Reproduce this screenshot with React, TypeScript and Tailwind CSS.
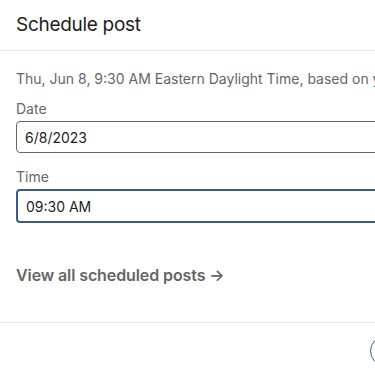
import React from "react";

export default function App() {
  return (
    <div
      className="w-[375px] h-[375px] overflow-hidden bg-white text-[#191919]"
      style={{ fontFamily: "Inter, 'Noto Sans', sans-serif" }}
    >
      <div className="w-[552px]">
        {/* Header */}
        <div className="h-[51px] px-4 flex items-center border-b border-[#e8e8e8]">
          <h2 className="text-[19px] leading-[26px] font-normal tracking-[-0.3px] text-[#1d1d1d]">Schedule post</h2>
        </div>

        {/* Body */}
        <div className="px-4 pt-[18px]">
          <p className="text-[14px] leading-[20px] text-[#666666] whitespace-nowrap">
            Thu, Jun 8, 9:30 AM Eastern Daylight Time, based on your location
          </p>

          <div className="mt-[10px]">
            <label className="block text-[14px] leading-[20px] text-[#666666]">Date</label>
            <div className="mt-[2px] h-[32px] rounded-[4px] border border-[#666666] px-[8px] flex items-center text-[14px] text-[#1d1d1d]">
              6/8/2023
            </div>
          </div>

          <div className="mt-[14px]">
            <label className="block text-[14px] leading-[20px] text-[#666666]">Time</label>
            <div className="mt-[2px] h-[34px] rounded-[4px] border-2 border-[#395b8f] px-[8px] flex items-center text-[14px] text-[#1d1d1d]">
              09:30 AM
            </div>
          </div>

          <div className="pt-[40px] pb-[35px]">
            <a className="text-[16px] leading-[24px] font-semibold tracking-[-0.1px] text-[#666666]">
              View all scheduled posts →
            </a>
          </div>
        </div>

        {/* Footer */}
        <div className="border-t border-[#e8e8e8] h-[56px] flex items-center pl-[370px]">
          <button className="h-[30px] px-4 rounded-full border border-[#395b8f] text-[#0a66c2] text-[16px] font-semibold">
            Back
          </button>
        </div>
      </div>
    </div>
  );
}
